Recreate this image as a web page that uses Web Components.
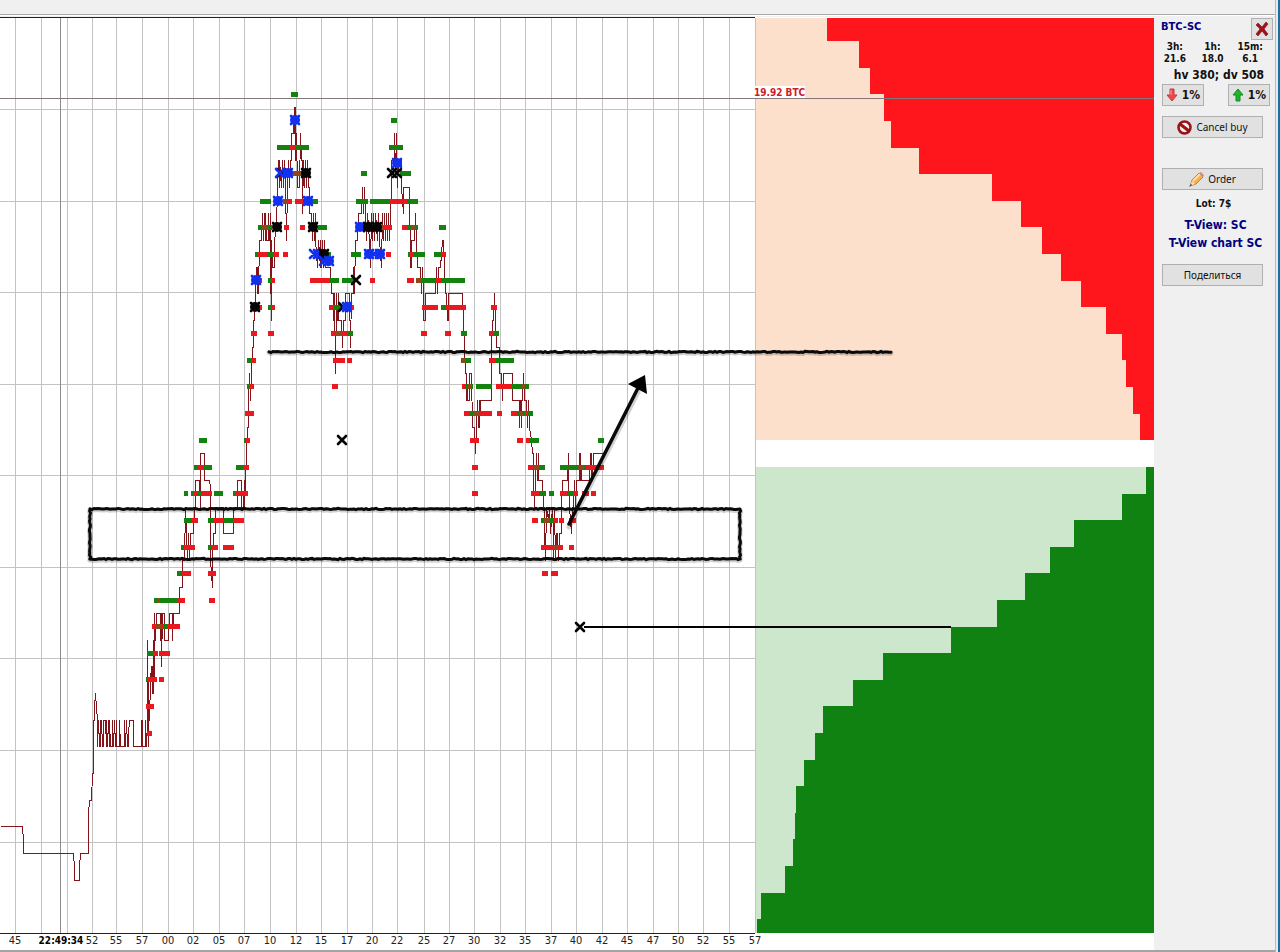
<!DOCTYPE html>
<html lang="ru">
<head>
<meta charset="utf-8">
<title>BTC-SC</title>
<style>
body { margin: 0; background: #fff; font-family: "DejaVu Sans Condensed", "DejaVu Sans", Verdana, sans-serif; }
</style>
</head>
<body>
<trade-window>
  <trade-chart></trade-chart>
  <trade-panel slot="side"></trade-panel>
</trade-window>
<script>
const define = (name, html, setup) => customElements.define(name, class extends HTMLElement {
  constructor() {
    super();
    this.attachShadow({ mode: 'open' }).innerHTML = html;
    if (setup) setup(this.shadowRoot, this);
  }
});

define('trade-window', `
<style>
:host { display: grid; grid-template-columns: minmax(0, 1fr) auto; background: #f0f0f0; border-right: 2px solid #18719f; box-sizing: border-box; }
.frame { display: block; min-width: 0; border-right: 1px solid #b4bcc4; }
.bar { height: 14px; background: #f0f0f0; border-bottom: 1px solid #a8a8ac; box-shadow: 0 1px #fff; }
.body { display: flex; align-items: stretch; margin-top: 2px; border-bottom: 2px solid #a3a3a3; }
.main { flex: 1; min-width: 0; background: #fff; }
.edge { width: 2px; background: #e4eaf0; }
</style>
<div class="frame">
  <header class="bar"></header>
  <div class="body"><main class="main"><slot></slot></main><slot name="side"></slot></div>
</div>
<div class="edge"></div>`);

define('tool-button', `
<style>
:host { display: block; }
button { width: 100%; height: 22px; padding: 0 2px; box-sizing: border-box; display: flex; align-items: center; justify-content: center; gap: 4px;
  background: #e1e1e1; border: 1px solid #b0b0b0; font: 10px "Noto Sans", sans-serif; color: #111; white-space: nowrap; }
:host([strong]) button { font: bold 12px "DejaVu Sans Condensed", "DejaVu Sans", sans-serif; }
</style>
<button type="button"><slot name="icon"></slot><slot></slot></button>`, (root, host) => {
  const label = host.getAttribute('label');
  if (label) root.querySelector('button').setAttribute('aria-label', label);
});

define('trade-panel', `
<style>
:host { display: block; width: 121px; background: #f0f0f0; color: #111; font-weight: bold; font-size: 11px; line-height: 12px; }
svg { display: block; }
.head { display: flex; justify-content: space-between; align-items: flex-start; padding: 1px 2px 0 7px; }
h1 { margin: 2px 0 0; font-size: 11px; line-height: 14px; color: #000080; }
.close { width: 22px; }
dl { display: grid; grid-template-columns: repeat(3, 1fr); margin: 1px 6px 0 2px; font-size: 10px; text-align: center; }
dd { margin: 0; }
.vol { margin: 3px 11px 0 0; font-size: 12px; line-height: 14px; text-align: right; white-space: nowrap; }
.pair { display: flex; justify-content: space-between; margin: 2px 5px 0 8px; }
.pair tool-button { width: 42px; }
.wide { margin: 10px 12px 0 8px; }
.order { margin-top: 30px; }
.lot { margin: 8px 0 0; padding-right: 2px; text-align: center; font-size: 10px; }
nav { display: flex; flex-direction: column; align-items: center; margin-top: 6px; padding-left: 2px; font-size: 12px; line-height: 18px; }
a { color: #000080; text-decoration: none; white-space: nowrap; }
.share { margin-top: 12px; }
</style>
<div class="head"><h1>BTC-SC</h1>
  <tool-button class="close" label="Close"><svg slot="icon" width="14" height="14" viewBox="0 0 14 14"><path d="M3 1 7 5 11 0 13 2 9 7 13 12 11 14 7 9 3 14 1 12 5 7 1 3Z" fill="#a30f1a" stroke="#7c0b12" stroke-width=".6"/></svg></tool-button>
</div>
<dl><div><dt>3h:</dt><dd>21.6</dd></div><div><dt>1h:</dt><dd>18.0</dd></div><div><dt>15m:</dt><dd>6.1</dd></div></dl>
<p class="vol">hv 380; dv 508</p>
<div class="pair">
  <tool-button strong><svg slot="icon" width="12" height="14" viewBox="0 0 12 14"><path d="M4 1H8V7H11L6 13 1 7H4Z" fill="#ee4650" stroke="#c83a42" stroke-width="1"/><path d="M5 2V7" stroke="#ff9a9a"/></svg>1%</tool-button>
  <tool-button strong><svg slot="icon" width="12" height="14" viewBox="0 0 12 14"><path d="M4 13H8V7H11L6 1 1 7H4Z" fill="#20b42c" stroke="#138a1d" stroke-width="1"/></svg>1%</tool-button>
</div>
<tool-button class="wide"><svg slot="icon" width="15" height="15" viewBox="0 0 15 15"><circle cx="7.500" cy="7.500" r="6" fill="#eee" stroke="#9b1118" stroke-width="2.500"/><path d="M3 4 12 11" stroke="#9b1118" stroke-width="3"/></svg>Cancel buy</tool-button>
<tool-button class="wide order"><svg slot="icon" width="15" height="15" viewBox="0 0 15 15"><path d="M1 14 3 8 10 1 14 5 7 12Z" fill="#f7b04d" stroke="#b9813f"/><path d="M4 9 11 2" stroke="#ffe0a0" stroke-width="2"/><path d="M10 1 12 0 15 3 14 5Z" fill="#cf8e84"/><path d="M1 14 3 9 6 12Z" fill="#f2dcc0"/><path d="M0 15 2 12 3 13Z" fill="#333"/></svg>Order</tool-button>
<p class="lot">Lot: 7$</p>
<nav><a href="#tview">T-View: SC</a><a href="#chart">T-View chart SC</a></nav>
<tool-button class="wide share">Поделиться</tool-button>`);

const GREEN = '#14820f', RED = '#e9191f', MIX = '#8c4a1c';

const GRID_X = [15,41,67,92,116,142,168,193,219,244,270,296,321,347,372,397,424,449,474,500,525,551,576,602,627,653,678,703,729,755];
const GRID_Y = [109,201,292,384,475,567,658,750,842];
const TICKS = ['45','','','52','55','57','00','02','05','07','10','12','15','17','20','22','25','27','30','32','35','37','40','42','45','47','50','52','55','57'];

/* Quote marks per price row: colour letter, first x, last x. */
const MARKS = {
  94: 'g291-298', 120: 'g391-397',
  147: 'g277-309 r290-295 g389-403',
  173: 'm291-303 g361-367 g400-411',
  201: 'g260-271 m283-287 r287-292 r295-304 g312-318 g356-368 g370-418 r389-407',
  227: 'g258-272 m262-268 r284-289 r300-305 g318-327 m378-384 r384-392 r402-408 g408-418 m411-415 g439-446',
  254: 'g255-261 r258-268 g267-273 r273-279 r283-288 g322-331 g351-361 r386-391 g408-413 r409-414 g414-425 g434-442 r441-446',
  280: 'r258-262 g268-272 r271-275 r310-330 g330-339 g342-353 r370-375 r407-414 g416-465 m416-422 r436-441',
  307: 'r258-262 g268-272 r271-275 r329-334 g334-341 r348-354 r422-438 g441-447 r446-466 r491-497',
  333: 'r251-257 r268-274 r331-336 m336-342 r342-348 g347-353 r421-427 r445-451 g461-467 r489-494 g494-499',
  360: 'g247-252 r252-256 r333-345 r347-352 g461-471 m462-465 r489-497 g496-514',
  386: 'g247-250 r249-254 r332-338 r462-466 g465-473 m468-471 g476-492 r496-513 g512-529 m521-525',
  413: 'r245-254 r464-470 g470-475 m474-482 r480-492 r497-502 r511-517 g517-527 m520-523 r525-529 g528-533',
  440: 'g199-207 g244-247 r246-250 r470-479 r517-523 r526-531 g530-539 g598-604',
  467: 'g194-212 r198-203 g236-244 r243-249 r472-478 r528-534 g533-545 m534-539 g560-604 m578-584 r586-604',
  493: 'g184-188 g191-212 r193-197 r201-212 g214-223 g233-236 r235-248 r472-478 r531-540 g539-546 g549-554 r560-568 g567-573 r573-578 r582-589 r591-596',
  520: 'g184-193 r192-198 g208-214 r213-223 g223-233 r233-244 r532-538 g541-554 m544-550 r554-558 r559-564 r569-576',
  547: 'g181-184 r184-195 g208-213 r212-218 r223-234 r541-563 m553-557 r569-574',
  573: 'g177-183 r182-191 r208-216 r542-548 r551-558',
  600: 'g154-178 m157-160 r177-185 r209-215',
  626: 'r152-180 m155-162 g163-167',
  653: 'g147-154 r153-158 r159-170',
  679: 'g146-149 r148-157 r159-164',
  706: 'r146-154', 733: 'r147-152'
};

/* Price steps: pairs of x, y. */
const PRICE = `22 826 23 840 23 853 73 853 74 867 74 880 79 880 79 867 80 853 88 853 88 813 89 800 91 800 92 773 93 773 93 720 94 720 94 707 95 693 96 707 97 720 97 746
98 720 99 746 100 720 100 746 101 720 102 746 103 746 103 720 105 720 106 746 106 720 107 746 108 720 109 746 109 720 110 746 112 746 112 720 113 746 114 720 115 746 116 720 116 746 119 746 119 720 120 746
124 746 124 720 125 746 126 720 127 746 128 746 128 733 129 720 133 720 133 746 141 746 141 720 142 720 142 746 145 746 145 720 146 746 147 720 147 640 148 746 148 680 149 720 150 680 151 666 152 693 153 640 153 693
154 666 154 613 155 640 156 613 160 613 160 640 161 613 161 666 162 613 164 613 164 640 168 640 169 613 172 613 172 640 173 613 179 613 179 587 182 587 182 560 184 560 185 507 186 533 187 560 188 533 189 560 190 533 193 533 194 507 195 507 195 480 199 480 200 507
200 453 204 453 204 480 209 480 210 487 210 560 212 587 212 560 213 533 215 533 215 507 223 507 223 533 233 533 233 507 237 507 237 480 241 480 241 507 243 507 244 480 244 507 245 480 246 453 247 427 248 427 248 400 249 373 250 400 251 373
252 347 253 347 253 320 254 320 255 293 256 267 257 293 257 267 258 293 259 240 261 240 262 213 263 240 264 213 265 240 265 213 266 240 268 240 268 213 269 240 270 213 270 267 271 320 271 240 272 267 274 267 274 240 276 227 277 187
278 160 279 187 279 160 281 187 282 160 283 187 284 160 285 187 286 240 287 187 288 160 289 187 290 160 291 160 291 133 293 133 294 107 294 133 295 107 295 160 296 133 297 187 299 187 300 133 301 160 302 160 302 213 303 160 304 187 305 160 306 187 307 160 308 187 309 187 309 213
311 213 312 240 313 213 314 240 315 213 315 240 317 267 318 240 320 267 320 240 321 267 322 240 323 267 324 240 325 267 330 267 331 293 333 293 333 320 334 293 335 373 336 293 337 320 338 293 338 320 341 320 342 347 343 320 345 320 345 293 349 293 350 347 351 293
353 293 353 267 354 293 355 240 357 240 358 213 361 213 362 187 363 213 364 187 365 213 366 240 367 213 369 240 370 267 371 213 372 240 373 213 374 240 375 213 377 240 378 213 379 240 381 267 382 213 383 240 384 213 385 240 386 213 387 240 388 213 389 240 390 213 391 187 391 160
394 160 394 133 395 173 396 133 397 187 398 160 401 160 401 187 403 213 403 187 409 187 410 267 411 267 411 240 414 240 415 213 416 240 417 267 420 267 421 293 422 267 423 293 423 320 425 320 425 293 435 293 436 267 437 293 438 267 440 267 442 240 443 240 444 267 445 293 446 293 447 320
448 320 448 293 462 293 463 320 464 347 465 373 466 373 466 400 467 387 467 400 469 400 469 373 471 373 472 427 474 427 475 453 476 427 477 400 478 427 479 400 479 427 480 400 491 400 491 347 492 320 493 320 494 293 495 320 496 347 499 347 499 373 501 373 502 400 503 373 512 373 512 400
519 400 519 427 520 400 521 427 521 400 522 400 523 373 524 400 526 400 527 427 528 400 529 427 531 440 532 453 533 453 533 480 534 507 535 480 536 453 537 480 538 453 538 480 542 480 543 507 544 507 544 533 545 560 546 507 548 520 549 507 550 533 552 507 553 533 553 560 554 507 555 560 556 533 557 533 558 560 559 533 561 533 561 507
562 480 567 480 568 453 568 480 569 507 571 533 572 507 573 507 574 480 575 507 576 480 579 480 579 453 580 480 580 453 581 480 589 480 590 453 591 480 591 453 592 480 593 453 602 453`;

/* Order book: left edge of each level from the top down. */
const ASKS = [827,859,870,884,891,919,992,1021,1042,1061,1081,1106,1122,1126,1133,1140];
const BIDS = [1146,1122,1074,1050,1025,997,951,883,853,823,815,804,796,795,793,785,761,757];
const ROW = 26.6;

const TRADES = [
  ['blue',295,120,1],['black',281,173],['blue',280,173],['blue',288,173,1],['black',306,173,1],['blue',278,201,1],['blue',308,201,1],['black',277,227,1],['black',313,227,1],
  ['blue',314,254],['blue',318,254,1],['black',324,254,1],['blue',324,261],['blue',329,261,1],['blue',256,280,1],['black',255,307,1],['black',343,307],['blue',347,307,1],['black',356,280],
  ['blue',360,227,1],['black',368,227,1],['black',377,227,1],['black',373,227],['blue',369,254,1],['blue',374,254],['blue',380,254,1],['black',392,173],['black',397,173],['blue',397,163,1],
  ['black',342,440],['black',580,627]
];

function depth(edges, top, end) {
  let d = `M1154 ${top}`, y = top;
  edges.forEach((x, i) => {
    d += `H${x}`;
    y = i === edges.length - 1 ? end : Math.round((top < 100 ? 14.5 : 467) + (i + 1) * ROW);
    d += `V${y}`;
  });
  return d + 'H1154Z';
}

/* Hand-drawn stroke: a straight run with a small repeatable wobble. */
function ink(x1, y1, x2, y2) {
  const n = Math.round(Math.hypot(x2 - x1, y2 - y1) / 2);
  let seed = 7, d = '';
  for (let i = 0; i <= n; i++) {
    seed = (seed * 1103 + 12345) % 65521;
    const w = (seed / 65521 - .5) * 1.2, t = i / n;
    const across = x1 === x2;
    d += `${i ? 'L' : 'M'}${(x1 + (x2 - x1) * t + (across ? w : 0)).toFixed(1)} ${(y1 + (y2 - y1) * t + (across ? 0 : w)).toFixed(1)}`;
  }
  return d;
}

define('trade-chart', `
<style>
:host { display: block; }
svg { display: block; width: 100%; height: auto; }
text { font: 11px "DejaVu Sans Condensed", "DejaVu Sans", sans-serif; fill: #222; text-anchor: middle; }
.now { font-weight: bold; font-size: 10px; fill: #000; }
.ask { font-weight: bold; font-size: 10px; fill: #cf1b25; text-anchor: start; }
</style>
<svg viewBox="0 17 1154 933" role="img" aria-label="BTC-SC"></svg>`, root => {
  const fills = { g: GREEN, r: RED, m: MIX };
  let s = '<rect x="0" y="17" width="1154" height="933" fill="#fff"/>';
  s += `<g shape-rendering="crispEdges"><path d="${GRID_X.map(x => `M${x}.5 18V933`).join('')}${GRID_Y.map(y => `M0 ${y}.5H755`).join('')}" stroke="#c3c3c3"/>`;
  s += `<path d="M0 17.5H755M0 933.5H755" stroke="#222"/><path d="M60.500 18V933" stroke="#8c8c8c"/>`;
  s += `<rect x="756" y="18" width="398" height="422" fill="#fde0cc"/><rect x="756" y="467" width="398" height="466" fill="#cce7cb"/>`;
  s += `<path d="${depth(ASKS, 18, 440)}" fill="#ff161d"/><path d="${depth(BIDS, 467, 933)}" fill="#108212"/></g>`;
  s += `<rect x="755" y="86" width="50" height="12" fill="#fff"/><text class="ask" x="754" y="96">19.92 BTC</text>`;
  s += `<path d="M0 98.500H1154" stroke="#85787c" shape-rendering="crispEdges"/>`;
  s += `<path d="M0 826L${PRICE.trim().replace(/\s+/g, ' ')}" fill="none" stroke="#82141a" transform="translate(.5 .5)" shape-rendering="crispEdges"/>`;
  for (const y in MARKS) for (const m of MARKS[y].split(' ')) {
    const [a, b] = m.slice(1).split('-').map(Number);
    s += `<rect x="${a}" y="${y - 2}" width="${b - a}" height="5" fill="${fills[m[0]]}" shape-rendering="crispEdges"/>`;
  }
  for (const [c, x, y, full] of TRADES) {
    const col = c === 'blue' ? '#1230f0' : '#050505';
    s += `<path d="M${x - 4} ${y - 4}L${x + 4} ${y + 4}M${x + 4} ${y - 4}L${x - 4} ${y + 4}" stroke="${col}" stroke-width="2.600" stroke-linecap="round"/>`;
    if (full) s += `<circle cx="${x}" cy="${y}" r="5" fill="${col}"/>`;
  }
  s += `<path d="M584 627H951" stroke="#000" stroke-width="2" shape-rendering="crispEdges"/>`;
  const marks = [ink(269, 352, 891, 352), ink(90, 509, 740, 509), ink(740, 509, 740, 559), ink(740, 559, 90, 559), ink(90, 559, 90, 509)].join('');
  s += `<g fill="none" stroke-linecap="round"><path d="${marks}M569 526L638 391" stroke="#000" stroke-opacity=".18" stroke-width="5" transform="translate(0 1)"/>`;
  s += `<path d="${marks}" stroke="#0a0a0a" stroke-width="3"/><path d="M569 524L638 388" stroke="#0a0a0a" stroke-width="3.500"/></g><path d="M645 375L628 384 647 394Z" fill="#000"/>`;
  s += TICKS.map((t, i) => t && `<text x="${GRID_X[i]}" y="944">${t}</text>`).join('');
  s += `<text class="now" x="61" y="944">22:49:34</text>`;
  root.querySelector('svg').innerHTML = s;
});
</script>
</body>
</html>
